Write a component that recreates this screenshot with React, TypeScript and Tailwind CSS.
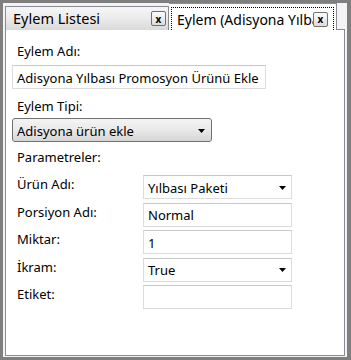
import React from "react";

const font = { fontFamily: '"Noto Sans", "Open Sans", sans-serif' };

function CloseBtn() {
  return (
    <div className="flex h-[15px] w-[15px] shrink-0 items-center justify-center rounded-[2px] border border-[#707070] bg-gradient-to-b from-[#fdfdfd] to-[#dcdcdc] text-[10px] font-bold leading-none text-black">
      x
    </div>
  );
}

function Arrow() {
  return (
    <svg width="7" height="4" viewBox="0 0 7 4" className="shrink-0">
      <path d="M0 0h7L3.5 4z" fill="#000" />
    </svg>
  );
}

function TextBox({ value, className = "" }: { value: string; className?: string }) {
  return (
    <div
      className={`flex h-[24px] items-center border border-[#dcdcdc] border-t-[#c8c8c8] bg-white px-[4px] pt-[1px] text-[13px] text-black ${className}`}
    >
      {value}
    </div>
  );
}

function ParamCombo({ value }: { value: string }) {
  return (
    <div className="flex h-[24px] items-center justify-between border border-[#dcdcdc] border-t-[#c8c8c8] bg-white pl-[4px] pr-[5px] pt-[1px] text-[13px] text-black">
      <span>{value}</span>
      <Arrow />
    </div>
  );
}

const params = [
  { label: "Ürün Adı:", value: "Yılbası Paketi", combo: true },
  { label: "Porsiyon Adı:", value: "Normal", combo: false },
  { label: "Miktar:", value: "1", combo: false },
  { label: "İkram:", value: "True", combo: true },
  { label: "Etiket:", value: "", combo: false },
];

export default function App() {
  return (
    <div style={font} className="h-[360px] w-[351px] bg-[#7f7f7f] pb-[3px] pl-[3px] pr-[4px] pt-[3px]">
      <div className="flex h-full flex-col bg-[#f3f3f3] px-[2px] pb-[1px]">
        {/* tab strip */}
        <div className="relative z-10 flex h-[26px] items-end">
          <div className="mb-[-1px] flex h-[24px] w-[164px] items-center justify-between border border-[#898c95] border-b-0 bg-gradient-to-b from-[#f6f6f6] via-[#ebebeb] to-[#d9d9d9] pl-[7px] pr-[2px] text-[14.5px] text-black">
            <span>Eylem Listesi</span>
            <CloseBtn />
          </div>
          <div className="mb-[-1px] flex h-[27px] w-[168px] items-stretch border border-l-0 border-[#898c95] border-b-0 bg-white px-[2px] pb-0 pt-[3px]">
            <div className="flex flex-1 items-center border border-dotted border-b-0 border-black pl-[5px] pr-[2px] text-[14px] text-black">
              <span className="w-[136px] overflow-hidden whitespace-nowrap">Eylem (Adisyona Yılbası Promosyon Ürünü Ekle)</span>
              <CloseBtn />
            </div>
          </div>
        </div>

        {/* panel */}
        <div className="flex-1 border border-[#898c95] bg-white pl-[6px] pt-[13px] text-[13px] leading-[16px] text-black">
          <div className="pl-[5px]">Eylem Adı:</div>
          <TextBox value="Adisyona Yılbası Promosyon Ürünü Ekle" className="mt-[6px] w-[254px]" />
          <div className="mt-[9px] pl-[5px]">Eylem Tipi:</div>
          <div className="mt-[4px] flex h-[24px] w-[200px] items-center justify-between rounded-[3px] border border-[#707070] bg-gradient-to-b from-[#f4f4f4] via-[#e9e9e9] to-[#d6d6d6] pl-[4px] pr-[6px] pt-[1px]">
            <span>Adisyona ürün ekle</span>
            <Arrow />
          </div>
          <div className="mt-[7px] pl-[5px]">Parametreler:</div>
          <div className="mt-[10px] flex flex-col gap-[3.5px] pl-[5px]">
            {params.map((p) => (
              <div key={p.label} className="flex items-start">
                <div className="w-[126px] pt-[1px]">{p.label}</div>
                <div className="w-[149px]">
                  {p.combo ? <ParamCombo value={p.value} /> : <TextBox value={p.value} />}
                </div>
              </div>
            ))}
          </div>
        </div>
      </div>
    </div>
  );
}
